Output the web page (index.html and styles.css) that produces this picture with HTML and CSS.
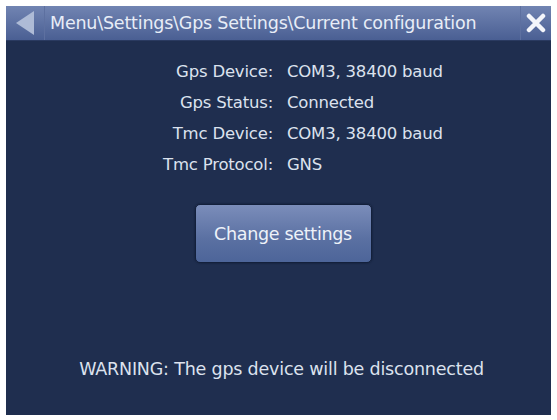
FILE: index.html
```html
<!DOCTYPE html>
<html>
<head>
<meta charset="utf-8">
<link rel="stylesheet" href="styles.css">
</head>
<body>
<div class="screen">
  <div class="titlebar">
    <div class="back">
      <svg width="22" height="26" viewBox="0 0 22 26"><path d="M20 1 L2 13 L20 25 Z" fill="#aebbd6"/></svg>
    </div>
    <div class="title">Menu\Settings\Gps Settings\Current configuration</div>
    <div class="close">
      <svg width="20" height="20" viewBox="0 0 20 20"><path d="M3 3 L17 17 M17 3 L3 17" stroke="#f4f6fb" stroke-width="4.5" stroke-linecap="round"/></svg>
    </div>
  </div>
  <div class="content">
    <div class="info">
      <div class="label">Gps Device:</div><div class="value">COM3, 38400 baud</div>
      <div class="label">Gps Status:</div><div class="value">Connected</div>
      <div class="label">Tmc Device:</div><div class="value">COM3, 38400 baud</div>
      <div class="label">Tmc Protocol:</div><div class="value">GNS</div>
    </div>
    <div class="btnwrap"><div class="button">Change settings</div></div>
    <div class="warning">WARNING: The gps device will be disconnected</div>
  </div>
</div>
</body>
</html>
```
FILE: styles.css
```css
html, body {
  margin: 0;
  padding: 0;
  background: #ffffff;
}
body {
  padding: 6px;
  font-family: "DejaVu Sans", sans-serif;
}
.screen {
  width: 545px;
  height: 409px;
  background: #1f2e4f;
  display: flex;
  flex-direction: column;
}
.titlebar {
  height: 34px;
  display: flex;
  align-items: center;
  background: linear-gradient(#7184b2, #4a5f93);
  border-bottom: 1px solid #2a3a60;
}
.back {
  width: 38px;
  height: 100%;
  display: flex;
  align-items: center;
  justify-content: center;
  border-right: 1px solid #5d70a0;
}
.title {
  flex: 1;
  color: #e8edf7;
  font-size: 17.5px;
  letter-spacing: -0.2px;
  padding-left: 5px;
  white-space: nowrap;
}
.close {
  width: 30px;
  height: 100%;
  display: flex;
  align-items: center;
  justify-content: center;
  border-left: 1px solid #5d70a0;
}
.content {
  flex: 1;
  display: flex;
  flex-direction: column;
  color: #dce2ee;
}
.info {
  display: grid;
  grid-template-columns: 267px auto;
  column-gap: 14px;
  row-gap: 11px;
  margin-top: 21px;
  font-size: 16.5px;
  letter-spacing: -0.2px;
  line-height: 20px;
}
.label {
  text-align: right;
}
.btnwrap {
  display: flex;
  justify-content: center;
  margin-top: 29px;
  padding-left: 9px;
}
.button {
  width: 175px;
  height: 57px;
  border: 1px solid #13203b;
  border-radius: 5px;
  background: linear-gradient(#7b8dba, #5a70a2 60%, #4d6599);
  color: #eef2f9;
  font-size: 17.5px;
  letter-spacing: -0.3px;
  display: flex;
  align-items: center;
  justify-content: center;
  box-shadow: 0 0 2px #0d1830;
}
.warning {
  margin-top: 96px;
  text-align: center;
  font-size: 17.5px;
  letter-spacing: -0.2px;
  padding-left: 6px;
}
```
